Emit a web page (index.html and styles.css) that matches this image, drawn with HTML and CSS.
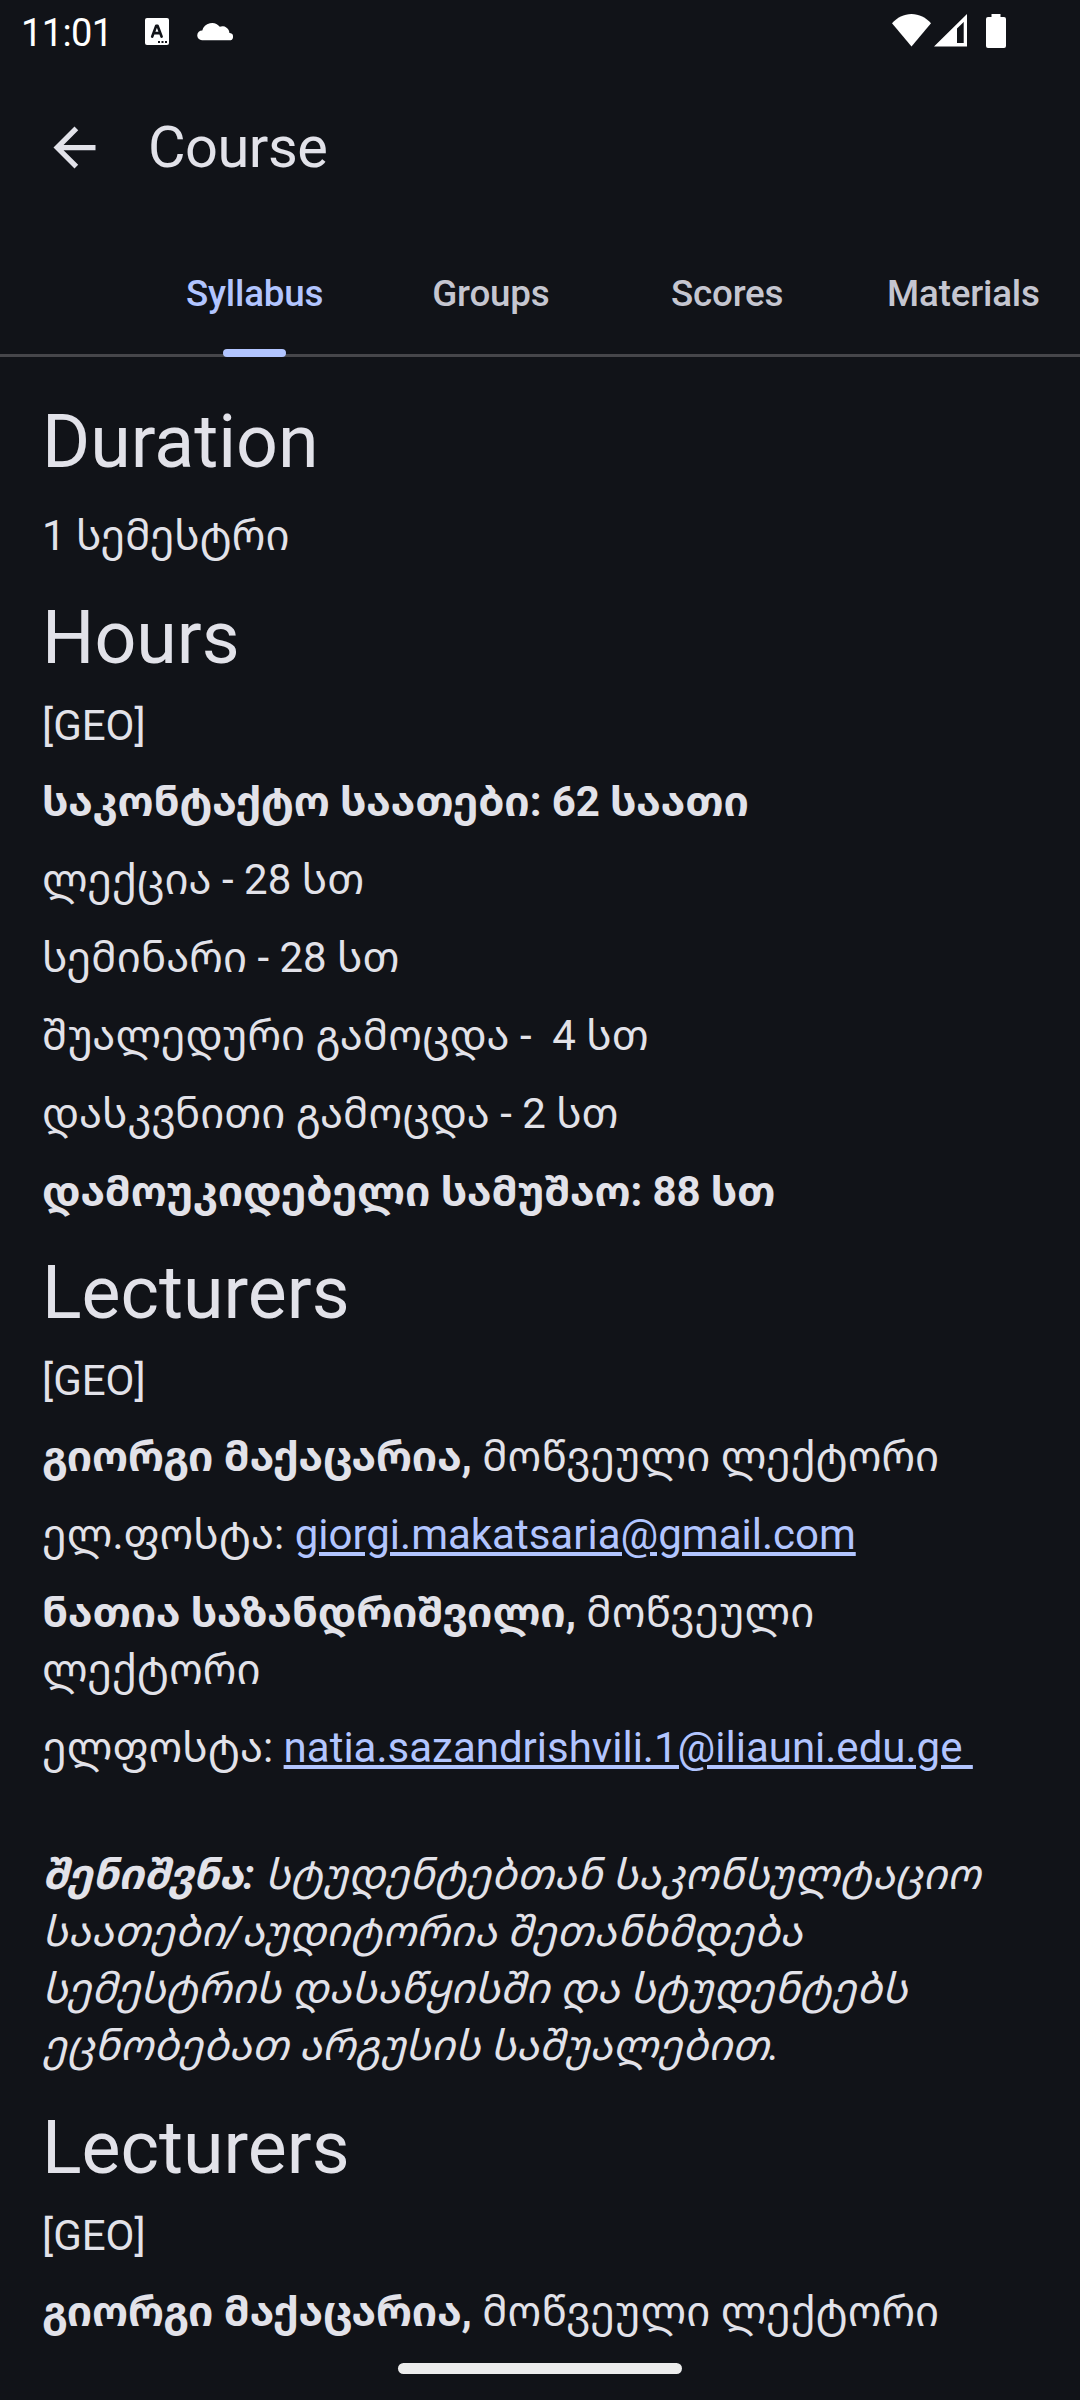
FILE: index.html
```
<!DOCTYPE html>
<html lang="ka">
<head>
<meta charset="utf-8">
<title>Course</title>
<link rel="stylesheet" href="styles.css">
</head>
<body>
<div class="screen">
  <div class="status-bar">
    <span class="clock">11:01</span>
    <svg class="app-icon" width="24" height="27" viewBox="0 0 24 27"><rect width="24" height="27" rx="2" fill="#fff"/><path d="M7.200 18.600 11.200 7.900h1.400l4 10.700M9 15.200h5.800" fill="none" stroke="#111318" stroke-width="2.700" stroke-linecap="round" stroke-linejoin="round"/><path d="M13 23h2v2h-2zM16.500 23h2v2h-2zM20 23h2v2h-2z" fill="#111318"/></svg>
    <svg class="cloud-icon" width="36" height="21" viewBox="0 0 36 21"><path d="M5 20.300A4.900 4.900 0 0 1 5.300 10.500A10 10 0 0 1 22.800 6.800A7 7 0 0 1 32.400 13A3.600 3.600 0 0 1 32.400 20.300z" fill="#fff"/></svg>
    <div class="system-icons">
      <svg width="39" height="33" viewBox="0 0 39 33"><path d="M19.500 32.500 0 9.300C5 3.500 12 0 19.500 0S34 3.500 39 9.300z" fill="#fff"/></svg>
      <svg class="signal" width="33" height="33" viewBox="0 0 33 33"><path fill-rule="evenodd" d="M33 0v32.500H0zM23 14.500V29h6.700V8z" fill="#fff"/></svg>
      <svg class="battery" width="20" height="34" viewBox="0 0 20 34"><path d="M5.500 0h9v3H18a2 2 0 0 1 2 2v27a2 2 0 0 1-2 2H2a2 2 0 0 1-2-2V5a2 2 0 0 1 2-2h3.500z" fill="#fff"/></svg>
    </div>
  </div>
  <header class="app-bar">
    <svg class="back" width="63" height="63" viewBox="0 0 24 24"><path d="M20 11H7.830l5.590-5.590L12 4l-8 8 8 8 1.410-1.410L7.830 13H20z" fill="#e2e2e9"/></svg>
    <h1>Course</h1>
  </header>
  <nav class="tabs">
    <a class="tab active">Syllabus</a>
    <a class="tab">Groups</a>
    <a class="tab">Scores</a>
    <a class="tab">Materials</a>
  </nav>
  <main class="content">
    <h2>Duration</h2>
    <p class="lead">1 სემესტრი</p>
    <h2>Hours</h2>
    <p class="lang">[GEO]</p>
    <p><b>საკონტაქტო საათები: 62 საათი</b></p>
    <p>ლექცია - 28 სთ</p>
    <p>სემინარი - 28 სთ</p>
    <p>შუალედური გამოცდა -&nbsp; 4 სთ</p>
    <p>დასკვნითი გამოცდა - 2 სთ</p>
    <p class="section-end"><b>დამოუკიდებელი სამუშაო: 88 სთ</b></p>
    <h2>Lecturers</h2>
    <p class="lang">[GEO]</p>
    <p><b>გიორგი მაქაცარია,</b> მოწვეული ლექტორი</p>
    <p>ელ.ფოსტა: <a class="link">giorgi.makatsaria@gmail.com</a></p>
    <p><b>ნათია საზანდრიშვილი,</b> მოწვეული ლექტორი</p>
    <p>ელფოსტა: <a class="link">natia.sazandrishvili.1@iliauni.edu.ge&nbsp;</a></p>
    <p class="note"><b>შენიშვნა:</b> სტუდენტებთან საკონსულტაციო საათები/აუდიტორია შეთანხმდება სემესტრის დასაწყისში და სტუდენტებს ეცნობებათ არგუსის საშუალებით.</p>
    <h2>Lecturers</h2>
    <p class="lang">[GEO]</p>
    <p><b>გიორგი მაქაცარია,</b> მოწვეული ლექტორი</p>
  </main>
  <div class="gesture-bar"></div>
</div>
</body>
</html>
```
FILE: styles.css
```
* { box-sizing: border-box; }
body {
  margin: 0;
  background: #111318;
  color: #e2e2e9;
  font-family: Roboto, "Noto Sans Georgian", sans-serif;
}
svg { display: block; flex: none; }
.screen {
  position: relative;
  width: 1080px;
  height: 2400px;
  overflow: hidden;
}
.status-bar {
  display: flex;
  align-items: flex-start;
  height: 63px;
  padding: 0 74px 0 21px;
  color: #fff;
}
.clock {
  width: 124px;
  padding-top: 11px;
  font-size: 38px;
  line-height: 45px;
  letter-spacing: -0.6px;
}
.app-icon { margin-top: 18px; }
.cloud-icon { margin: 20px 0 0 28px; }
.system-icons {
  display: flex;
  margin-left: auto;
  padding-top: 14px;
}
.signal { margin-left: 3px; }
.battery { margin-left: 19px; }
.app-bar {
  display: flex;
  align-items: center;
  height: 168px;
  padding-left: 43px;
}
h1 {
  margin: 0 0 0 42px;
  font-size: 57.75px;
  font-weight: 400;
  line-height: 74px;
  letter-spacing: -0.5px;
}
.tabs {
  display: flex;
  height: 126px;
  padding-left: 136.5px;
  border-bottom: 3px solid #46464a;
}
.tab {
  position: relative;
  flex: none;
  width: 236.25px;
  line-height: 126px;
  text-align: center;
  font-size: 36.75px;
  font-weight: 500;
  letter-spacing: -0.2px;
  color: #c5c6d0;
}
.active { color: #b2c5ff; }
.active::after {
  content: "";
  position: absolute;
  left: 86.5px;
  bottom: -3px;
  width: 63px;
  height: 8px;
  border-radius: 4px;
  background: #b2c5ff;
}
.content { padding: 38px 42px 0; }
h2 {
  margin: 27px 0 12px;
  font-size: 73.5px;
  font-weight: 400;
  line-height: 94px;
}
h2:first-child { margin-top: 0; }
p {
  margin: 0 0 21px;
  font-size: 42px;
  line-height: 57px;
}
b { letter-spacing: -0.13px; }
p.lead { margin-top: 18px; }
p.lang { margin-bottom: 19px; }
p.section-end { margin-bottom: 26px; }
p.section-end + h2 { margin-top: 0; }
.link {
  color: #b2c5ff;
  text-decoration: underline;
  text-decoration-thickness: 4px;
  text-underline-offset: 3px;
}
p.note {
  margin-top: 70px;
  font-style: italic;
}
.gesture-bar {
  position: absolute;
  left: 398px;
  bottom: 26px;
  width: 284px;
  height: 11px;
  border-radius: 6px;
  background: #ececec;
}
```
